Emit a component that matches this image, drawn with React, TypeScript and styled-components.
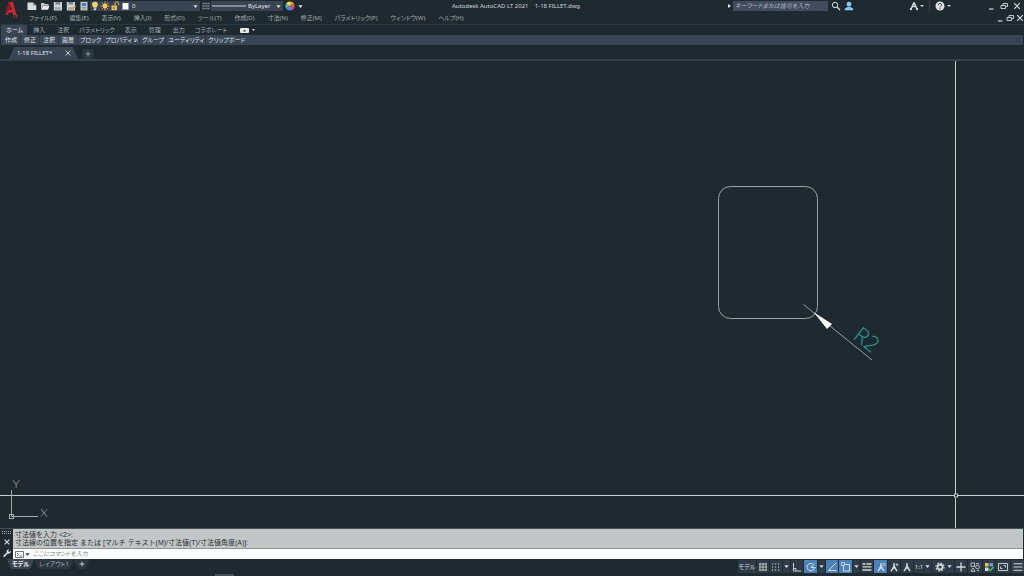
import React from 'react';
import styled, { createGlobalStyle, css } from 'styled-components';

const c = {
  base: '#1f2a30',
  panel: '#3a4553',
  strip: '#2f3b47',
  active: '#4b83b8',
  text: '#c4cacf',
  dim: '#a3abb1',
};

const Global = createGlobalStyle`
  * { box-sizing: border-box; }
  body { margin: 0; background: ${c.base}; }
  button, input, select {
    font: inherit; color: inherit; border: 0; padding: 0; margin: 0;
    background: transparent; border-radius: 0; outline: none; appearance: none;
  }
  svg { display: block; flex: none; }
`;

const Window = styled.div`
  display: flex;
  flex-direction: column;
  min-height: 100vh;
  color: ${c.text};
  background: ${c.base};
  font: 6px/8px 'Noto Sans', 'Noto Sans CJK JP', sans-serif;
  font-feature-settings: 'palt';
  white-space: nowrap;
`;

const TitleBar = styled.header`
  display: grid;
  grid-template-columns: 1fr auto 1fr;
  align-items: center;
  height: 12px;
`;

const Row = styled.div<{ $gap?: number }>`
  display: flex;
  align-items: center;
  gap: ${p => p.$gap ?? 0}px;
`;

const Brand = styled.div`
  width: 25px;
  height: 12px;
  padding: 2px 0 0 5px;
`;

const Title = styled.h1`
  margin: 0;
  padding-left: 8px;
  font-size: 6px;
  font-weight: 400;
  line-height: 8px;
  white-space: pre;
  color: #d2d6d9;
`;

const IconButton = styled.button<{ $w?: number }>`
  display: flex;
  align-items: center;
  justify-content: center;
  width: ${p => p.$w ?? 13}px;
  height: 10px;
`;

const Combo = styled.label<{ $w: number }>`
  display: flex;
  align-items: center;
  width: ${p => p.$w}px;
  height: 10px;
  padding-right: 2px;
  background: ${c.panel};
  select { flex: 1; min-width: 0; color: #e2e5e8; line-height: 8px; }
`;

const Search = styled.input`
  width: 95px;
  height: 10px;
  padding: 0 2px;
  background: #414c5e;
  &::placeholder { color: #b3bac2; font-style: italic; opacity: 1; }
`;

const RightTools = styled(Row)`
  justify-content: flex-end;
  padding-right: 1px;
`;

const Spacer = styled.span<{ $w: number }>`
  width: ${p => p.$w}px;
`;

const Divider = styled.span`
  width: 1px;
  height: 10px;
  background: #37434d;
`;

const MenuBar = styled.nav`
  display: flex;
  align-items: center;
  gap: 13px;
  height: 13px;
  padding: 0 0 0 29px;
  border-bottom: 1px solid #2b3743;
  color: ${c.dim};
`;

const DocControls = styled(Row)`
  margin-left: auto;
`;

const RibbonTabs = styled.nav`
  display: flex;
  align-items: stretch;
  height: 10px;
  padding-left: 1px;
`;

const RibbonTab = styled.button<{ $active?: boolean; $long?: boolean }>`
  padding: 0 ${p => (p.$long ? 4 : 6)}px;
  color: ${p => (p.$active ? '#e6e9eb' : c.dim)};
  ${p => p.$active && css`background: ${c.panel}; padding: 0 4px 0 5px; border-radius: 1px 1px 0 0;`}
`;

const PanelBar = styled.div`
  display: flex;
  align-items: center;
  height: 10px;
  margin: 0 1px;
  padding-left: 1px;
  background: ${c.panel};
`;

const PanelButton = styled.button<{ $long?: boolean }>`
  display: flex;
  align-items: center;
  gap: 2px;
  height: 10px;
  padding: 0 ${p => (p.$long ? 1 : 3)}px 0 ${p => (p.$long ? 2 : 3)}px;
  color: #dde1e4;
  border-right: 1px solid #2d3844;
  &:last-child { border-right: 0; }
`;

const FileTabs = styled.div`
  display: flex;
  align-items: flex-end;
  gap: 4px;
  height: 16px;
  padding-left: 9px;
  border-bottom: 2px solid #33404d;
`;

const FileTab = styled.div`
  display: flex;
  align-items: center;
  justify-content: space-between;
  width: 69px;
  height: 12px;
  padding: 0 7px 0 8px;
  color: #e6e9eb;
  background: ${c.panel};
  clip-path: polygon(5px 0, 64px 0, 69px 100%, 0 100%);
`;

const AddTab = styled.button`
  display: flex;
  align-items: center;
  justify-content: center;
  width: 12px;
  height: 10px;
  background: #2a3640;
  border-radius: 2px;
`;

const Canvas = styled.main`
  flex: 1;
  display: flex;
  min-height: 0;
  overflow: hidden;
  svg { flex: 1; width: 100%; height: auto; }
`;

const CommandPanel = styled.section`
  display: grid;
  grid-template-columns: 13px 1fr 1px;
  border-top: 1px solid #46515a;
`;

const Grip = styled.div`
  display: flex;
  flex-direction: column;
  justify-content: space-between;
  align-items: center;
  padding: 2px 0 1px;
`;

const History = styled.div`
  padding: 2px 2px 1px;
  color: #2b2f31;
  background: #c3c6c7;
  font: 7px/8px 'Liberation Sans', 'Noto Sans CJK JP', sans-serif;
  p { margin: 0; }
`;

const CommandLine = styled.label`
  display: flex;
  align-items: center;
  gap: 1px;
  height: 11px;
  padding-left: 2px;
  background: #fcfefe;
  border-top: 1px solid #8c9192;
  color: #33393d;
  input { flex: 1; min-width: 0; margin-left: 2px; line-height: 8px; }
  input::placeholder { color: #777d80; font-style: italic; opacity: 1; }
`;

const Footer = styled.footer`
  display: flex;
  justify-content: space-between;
  align-items: flex-start;
  height: 17px;
`;

const LayoutTabs = styled.nav`
  display: flex;
  padding-left: 7px;
`;

const LayoutTab = styled.button<{ $active?: boolean }>`
  height: 10px;
  padding: 0 5px;
  color: ${p => (p.$active ? '#f2f4f5' : c.dim)};
  background: ${p => (p.$active ? c.panel : '#2a3640')};
  font-weight: ${p => (p.$active ? 700 : 400)};
  clip-path: polygon(0 0, 100% 0, calc(100% - 4px) 100%, 4px 100%);
`;

const ScrollMark = styled.span`
  align-self: flex-end;
  width: 19px;
  height: 2px;
  margin: 0 auto 0 125px;
  background: #46515a;
`;

const StatusBar = styled.div`
  display: flex;
  gap: 1px;
  padding-top: 1px;
`;

const StatusButton = styled.button<{ $w?: number; $on?: boolean }>`
  display: flex;
  align-items: center;
  justify-content: center;
  gap: 2px;
  width: ${p => p.$w ?? 12}px;
  height: 13px;
  color: #dce0e3;
  background: ${p => (p.$on ? c.active : c.strip)};
`;

const Caret = ({ fill = '#d5d9dc' }: { fill?: string }) => (
  <svg width="5" height="3" viewBox="0 0 5 3"><path d="M.3 .3h4.4L2.5 2.9z" fill={fill} /></svg>
);

type G = { d?: string; w?: number; stroke?: string; children?: React.ReactNode; size?: number };
const Glyph = ({ d, w = 1, stroke = '#d5d9dc', children, size = 10 }: G) => (
  <svg width={size} height={size} viewBox="0 0 10 10" fill="none" stroke={stroke} strokeWidth={w}>
    {d && <path d={d} />}
    {children}
  </svg>
);

const NewIcon = () => <Glyph stroke="none"><path d="M.5 1.500h5.500l3.300 3v4.500h-8.800z" fill="#d9dcdd" /><path d="M6 1.500v3h3.300z" fill="#8d959a" /></Glyph>;
const OpenIcon = () => <Glyph stroke="none"><path d="M1 8.500V2h3l1 1h3.500v1.500H3z" fill="#c2c7ca" /><path d="M3 4.800h6.500L8 8.800H1z" fill="#e8eaeb" /></Glyph>;
const SaveIcon = ({ pencil }: { pencil?: boolean }) => (
  <Glyph stroke="none">
    <path d="M.8 1h8.200v8.500H.8z" fill="#cfd3d5" />
    <path d="M2.500 1h4.800v2.500H2.500zM2.500 6h4.800v3.500H2.500z" fill="#7b858d" />
    <path d="M3 6.800h3.700M3 8.200h3.700" stroke="#e5e8e9" strokeWidth=".7" />
    {pencil && <path d="M5.500 9L9.500 5" stroke="#e0a24e" strokeWidth="1.800" />}
  </Glyph>
);
const MobileIcon = () => <Glyph stroke="none"><path d="M1.500 .8h7v8.700h-7z" fill="#c9ced1" /><path d="M2.800 2h4.500v3H2.800z" fill="#4a7fa8" /><path d="M2.800 6.500h4.500M2.800 8h4.500" stroke="#7b858d" strokeWidth=".8" /></Glyph>;
const Bulb = () => <Glyph stroke="none"><path d="M5 .7C2.800.7 1.800 2.300 2 3.800c.2 1.200 1.400 1.700 1.600 3h2.800c.2-1.300 1.400-1.800 1.600-3C8.200 2.300 7.200.7 5 .7z" fill="#f6cf6c" /><path d="M3.800 7.300h2.400v1.900H3.800z" fill="#d9dcdd" /></Glyph>;
const Sun = () => <Glyph d="M5 .5v9M.5 5h9M1.800 1.800l6.400 6.400M8.200 1.800L1.800 8.200" stroke="#eda83e" w={0.9}><circle cx="5" cy="5" r="2.400" fill="#f9c65a" stroke="none" /></Glyph>;
const Lock = () => <Glyph stroke="#e9b757" d="M5 4.500V2.600a1.700 1.700 0 0 1 3.500 0V4"><path d="M1.500 4.500h5.500v4.700H1.500z" fill="#eebc5e" stroke="none" /><path d="M4 6v2" stroke="#5a4a25" /></Glyph>;
const Swatch = () => <Glyph stroke="none"><path d="M2.500 2h6v6.500h-6z" fill="#fff" /></Glyph>;
const MatchGrid = () => <Glyph d="M1 2.500h8M1 5h8M1 7.500h8" stroke="#7b858d" w={1.500}><path d="M2 1v8M4.200 1v8M6.400 1v8M8.600 1v8" stroke="#39444f" strokeWidth=".7" /></Glyph>;
const Wheel = () => (
  <Glyph stroke="none">
    <path d="M5 5V.4A4.600 4.600 0 0 1 9 2.700z" fill="#f3a13b" />
    <path d="M5 5L9 2.700A4.600 4.600 0 0 1 9 7.300z" fill="#e8574c" />
    <path d="M5 5L9 7.300A4.600 4.600 0 0 1 5 9.600z" fill="#a45bc4" />
    <path d="M5 5v4.600A4.600 4.600 0 0 1 1 7.300z" fill="#4a8fe0" />
    <path d="M5 5L1 7.300A4.600 4.600 0 0 1 1 2.700z" fill="#3fc0a0" />
    <path d="M5 5L1 2.700A4.600 4.600 0 0 1 5 .4z" fill="#f2dd5c" />
  </Glyph>
);
const Minimize = () => <Glyph d="M3 8h4.500" w={1.200} />;
const Restore = () => <Glyph d="M4 4V2.500H8.500V5.500H7M2 4.500h4.500V7.500H2z" w={0.900} />;
const Close = () => <Glyph d="M2.200 2.200l5.600 5.600M7.800 2.200L2.200 7.800" w={1.200} />;
const Plus = ({ w = 0.9 }: { w?: number }) => <Glyph d="M5 2.500v5M2.500 5h5" w={w} stroke="#9aa2a8" />;
const PersonMark = ({ star }: { star?: 'round' | 'flash' }) => (
  <Glyph w={1.400} d="M5 1v4L2 9M5 4.500L8 9">
    <path d="M3 6.500L5 2.500 7 6.500z" fill="#d5d9dc" stroke="none" />
    {star === 'round' && <circle cx="8" cy="2.500" r="1.300" strokeWidth=".7" />}
    {star === 'flash' && <path d="M6.500 2.700h3M8 1.200v3" strokeWidth=".8" />}
  </Glyph>
);

const menus = ['ファイル(F)', '編集(E)', '表示(V)', '挿入(I)', '形式(O)', 'ツール(T)', '作成(D)', '寸法(N)', '修正(M)', 'パラメトリック(P)', 'ウィンドウ(W)', 'ヘルプ(H)'];
const tabs = ['ホーム', '挿入', '注釈', 'パラメトリック', '表示', '管理', '出力', 'コラボレート'];
const panels = ['作成', '修正', '注釈', '画層', 'ブロック', 'プロパティ', 'グループ', 'ユーティリティ', 'クリップボード'];

function Drawing() {
  return (
    <svg viewBox="0 0 1024 467" preserveAspectRatio="xMidYMid slice" fill="none">
      <rect x="718.500" y="125.500" width="99" height="132" rx="12" stroke="#9da3a6" />
      <path d="M803.500 243.500L872 299" stroke="#a3a9ac" strokeWidth=".9" />
      <path d="M814 251.500L832 263L827 268z" fill="#fff" />
      <text
        transform="translate(852 277) rotate(38)"
        fontFamily="'Open Sans', sans-serif" fontWeight="300" fontSize="22" fill="#279a90"
      >R2</text>
      <path d="M0 434.500H954M958 434.500H1024M955.500 0V433M955.500 437V467" stroke="#c8cccd" />
      <rect x="954.500" y="433" width="3" height="3" stroke="#c8cccd" />
      <path d="M11.500 429V455.500H38" stroke="#a6abae" />
      <rect x="9.500" y="453.500" width="4" height="4" stroke="#a6abae" />
      <g fontFamily="Lato, sans-serif" fontWeight="300" fontSize="12" fill="#a9aeb1" textAnchor="middle">
        <text x="16" y="427">Y</text>
        <text x="44" y="456">X</text>
      </g>
    </svg>
  );
}

export default function App() {
  return (
    <Window lang="ja">
      <Global />
      <TitleBar>
        <Row>
          <Brand>
            <svg width="14" height="18" viewBox="0 0 14 18" overflow="visible">
              <path d="M4.200 0h3.600L11.500 13H8.300L7.600 10.500H3.800L2.800 13H0zM4.500 8h2.600L5.900 3.500z" fill="#cf2734" fillRule="evenodd" />
              <path d="M3.800 0L0 13l2-1.500L5.900 3.500z" fill="#8f1924" />
              <text x="8" y="16" fontSize="4" fontWeight="700" fill="#cf2734">LT</text>
            </svg>
          </Brand>
          <IconButton aria-label="新規"><NewIcon /></IconButton>
          <IconButton aria-label="開く"><OpenIcon /></IconButton>
          <IconButton aria-label="保存"><SaveIcon /></IconButton>
          <IconButton aria-label="別名で保存"><SaveIcon pencil /></IconButton>
          <IconButton aria-label="モバイル"><MobileIcon /></IconButton>
          <Combo $w={110}>
            <Bulb /><Sun /><Lock /><Swatch />
            <Spacer $w={2} />
            <select aria-label="画層"><option>0</option></select>
            <Caret />
          </Combo>
          <IconButton $w={11} aria-label="線種"><MatchGrid /></IconButton>
          <Combo $w={72}>
            <svg width="36" height="2"><path d="M1 1h34" stroke="#cdd1d4" /></svg>
            <Spacer $w={1} />
            <select aria-label="線の太さ"><option>ByLayer</option></select>
            <Caret />
          </Combo>
          <IconButton aria-label="色"><Wheel /></IconButton>
          <IconButton $w={9} aria-label="カスタマイズ"><Caret /></IconButton>
        </Row>
        <Title>{'Autodesk AutoCAD LT 2021    1-18 FILLET.dwg'}</Title>
        <RightTools>
          <svg width="6" height="6" viewBox="0 0 6 6"><path d="M1 1l3 2-3 2z" fill="#e2e5e8" /></svg>
          <Search aria-label="検索" placeholder="キーワードまたは語句を入力" />
          <Spacer $w={1} />
          <IconButton aria-label="検索を実行"><Glyph><circle cx="4" cy="4" r="2.700" /><path d="M6 6l3 3" strokeWidth="1.300" /></Glyph></IconButton>
          <IconButton aria-label="サインイン"><Glyph stroke="none"><circle cx="5" cy="3.200" r="2.400" fill="#8cc6ee" /><path d="M.8 9.200V7.500l3.200-1.700h2l3.200 1.700v1.700z" fill="#8cc6ee" /></Glyph></IconButton>
          <Spacer $w={52} />
          <IconButton aria-label="App Store"><Glyph w={1.500} d="M5 1.500L2.500 7M5 1.500L7.500 7M3.500 5.500h3"><circle cx="2" cy="8" r="1.200" fill="#d5d9dc" stroke="none" /><circle cx="8" cy="8" r="1.200" fill="#d5d9dc" stroke="none" /></Glyph></IconButton>
          <svg width="4" height="2"><path d="M0 0h4L2 2z" fill="#d5d9dc" /></svg>
          <Spacer $w={5} /><Divider /><Spacer $w={3} />
          <IconButton aria-label="ヘルプ"><Glyph stroke="none"><circle cx="5" cy="5" r="4.500" fill="#dfe2e4" /><path d="M3.500 3.900a1.500 1.500 0 1 1 2.200 1.300Q5 5.600 5 6.300M5 7.200v1" stroke="#2a343b" strokeWidth="1" /></Glyph></IconButton>
          <Spacer $w={1} />
          <svg width="4" height="2"><path d="M0 0h4L2 2z" fill="#d5d9dc" /></svg>
          <Spacer $w={33} />
          <IconButton aria-label="最小化"><Minimize /></IconButton>
          <IconButton aria-label="元に戻す"><Restore /></IconButton>
          <IconButton aria-label="閉じる"><Close /></IconButton>
        </RightTools>
      </TitleBar>

      <MenuBar>
        {menus.map(m => <button key={m}>{m}</button>)}
        <DocControls>
          <IconButton $w={10} aria-label="図面を最小化"><Minimize /></IconButton>
          <IconButton $w={10} aria-label="図面を元に戻す"><Restore /></IconButton>
          <IconButton $w={9} aria-label="図面を閉じる"><Close /></IconButton>
        </DocControls>
      </MenuBar>

      <RibbonTabs>
        {tabs.map((t, i) => <RibbonTab key={t} $active={i === 0} $long={t.length > 4}>{t}</RibbonTab>)}
        <Spacer $w={9} />
        <Row $gap={3}>
          <svg width="9" height="5" viewBox="0 0 9 5"><rect width="9" height="5" rx="1" fill="#e6e9eb" /><path d="M3 3.500h3L4.500 1.500z" fill="#333d45" /></svg>
          <svg width="3" height="2"><path d="M0 0h3L1.500 2z" fill="#d5d9dc" /></svg>
        </Row>
      </RibbonTabs>

      <PanelBar>
        {panels.map(p => (
          <PanelButton key={p} $long={p.length > 2}>
            {p}
            {p === 'プロパティ' && <svg width="4" height="4" viewBox="0 0 4 4" fill="none" stroke="#d5d9dc" strokeWidth=".8"><path d="M.3.5L2 3.500M2 .5l1.700 3M0 3.500h2" /></svg>}
          </PanelButton>
        ))}
      </PanelBar>

      <FileTabs>
        <FileTab>1-18 FILLET*<button aria-label="タブを閉じる"><Glyph size={6} w={1.500} d="M1 1l8 8M9 1L1 9" /></button></FileTab>
        <AddTab aria-label="新しいタブ"><Plus /></AddTab>
      </FileTabs>

      <Canvas><Drawing /></Canvas>

      <CommandPanel>
        <Grip>
          <svg width="10" height="4"><path d="M0 .5h10M0 2.500h10" stroke="#aab0b4" strokeDasharray="1 1" /></svg>
          <Glyph size={8} d="M2 2l6 6M8 2L2 8" w={1.500} />
          <Glyph stroke="none"><path d="M1 8.200L4.700 4.600C4.200 3 5.300 1.200 7.300 1.300L6 2.900l1.200 1.200L9 2.800c.2 2-1.500 3.200-3.200 2.800L2.200 9.300z" fill="#e2e5e8" /></Glyph>
        </Grip>
        <div>
          <History>
            <p>寸法値を入力 &lt;2&gt;:</p>
            <p>寸法線の位置を指定 または [マルチ テキスト(M)/寸法値(T)/寸法値角度(A)]:</p>
          </History>
          <CommandLine>
            <svg width="9" height="7" viewBox="0 0 9 7" fill="none" stroke="#4b5257" strokeWidth=".8"><path d="M.5.5h8v6h-8zM2 2l1.500 1.500L2 5M4.500 5h2.500" /></svg>
            <Caret fill="#3b4246" />
            <input aria-label="コマンド" placeholder="ここにコマンドを入力" />
          </CommandLine>
        </div>
      </CommandPanel>

      <Footer>
        <LayoutTabs>
          <LayoutTab $active>モデル</LayoutTab>
          <LayoutTab>レイアウト1</LayoutTab>
          <LayoutTab aria-label="レイアウトを追加"><Glyph size={6} d="M5 1v8M1 5h8" w={1.500} /></LayoutTab>
        </LayoutTabs>
        <ScrollMark />
        <StatusBar>
          <StatusButton $w={18}>モデル</StatusButton>
          <StatusButton aria-label="グリッド"><Glyph d="M2 1v8M5 1v8M8 1v8M1 2h8M1 5h8M1 8h8" w={0.8} /></StatusButton>
          <StatusButton aria-label="スナップ"><Glyph d="M1 2h9M1 5h9M1 8h9" w={1.200}><path d="M3 0v10M6 0v10M9 0v10" stroke={c.strip} strokeWidth="1.800" /></Glyph></StatusButton>
          <StatusButton $w={7} aria-label="スナップ設定"><Caret /></StatusButton>
          <StatusButton aria-label="直交"><Glyph d="M1.500 1v8H9M1.500 6.500H4V9" w={0.9} /></StatusButton>
          <StatusButton $w={13} $on aria-label="極"><Glyph d="M8.500 5.500A3.700 3.700 0 1 1 6.500 1.800M5 5.500h4.500M5 5.500L8.500 1.500" /></StatusButton>
          <StatusButton $w={7} aria-label="極設定"><Caret /></StatusButton>
          <StatusButton $on aria-label="トラッキング"><Glyph d="M9 1L1.500 8.500H9.500" /></StatusButton>
          <StatusButton $w={13} $on aria-label="スナップ点"><Glyph d="M2.500 2.500h6v6.500h-6z"><path d="M.5.5h3v3h-3z" fill={c.active} strokeWidth=".8" /></Glyph></StatusButton>
          <StatusButton $w={7} aria-label="スナップ点設定"><Caret /></StatusButton>
          <StatusButton aria-label="線の太さ表示"><Glyph d="M.5 2h3M4.500 2h5M.5 4.800h9M.5 8h9" w={1.300} /></StatusButton>
          <StatusButton $w={13} $on aria-label="注釈表示"><PersonMark star="round" /></StatusButton>
          <StatusButton aria-label="自動尺度"><PersonMark star="flash" /></StatusButton>
          <StatusButton aria-label="注釈尺度"><PersonMark /></StatusButton>
          <StatusButton $w={17}>1:1<Caret /></StatusButton>
          <StatusButton $w={22} aria-label="ワークスペース">
            <Glyph><circle cx="5" cy="5" r="2.500" strokeWidth="1.800" /><circle cx="5" cy="5" r="4" strokeDasharray="1.600 1.540" strokeWidth="1.200" /></Glyph>
            <Caret />
          </StatusButton>
          <StatusButton aria-label="注釈モニター"><Glyph d="M5 .5v9M.5 5h9" w={1.300} /></StatusButton>
          <StatusButton $w={14} aria-label="選択表示"><Glyph w={0.8} d="M1 1h3.500v3.500H1zM3 6l2 3.300H1z"><circle cx="7.500" cy="5" r="1.900" /><path d="M6 1.500h3M7 8.500h2" /></Glyph></StatusButton>
          <StatusButton aria-label="グラフィックス"><Glyph stroke="none"><path d="M1 1h3.500v3.500H1z" fill="#e6c45a" /><path d="M5.500 1H9v3.500H5.500z" fill="#5fa0dc" /><path d="M1 5.500h3.500V9H1z" fill="#d5d9dc" /><path d="M4.500 6.500l2 2L9.500 5" stroke="#4fb86a" strokeWidth="1.500" /></Glyph></StatusButton>
          <StatusButton $w={14} aria-label="フルスクリーン"><Glyph w={0.9} d="M.5 1.500h9v7h-9zM5.500 3.500h2v2M4.500 6.500h-2v-2" /></StatusButton>
          <StatusButton $w={13} aria-label="カスタマイズ"><Glyph d="M.5 1.800h9M.5 5h9M.5 8.200h9" w={1.100} /></StatusButton>
        </StatusBar>
      </Footer>
    </Window>
  );
}
